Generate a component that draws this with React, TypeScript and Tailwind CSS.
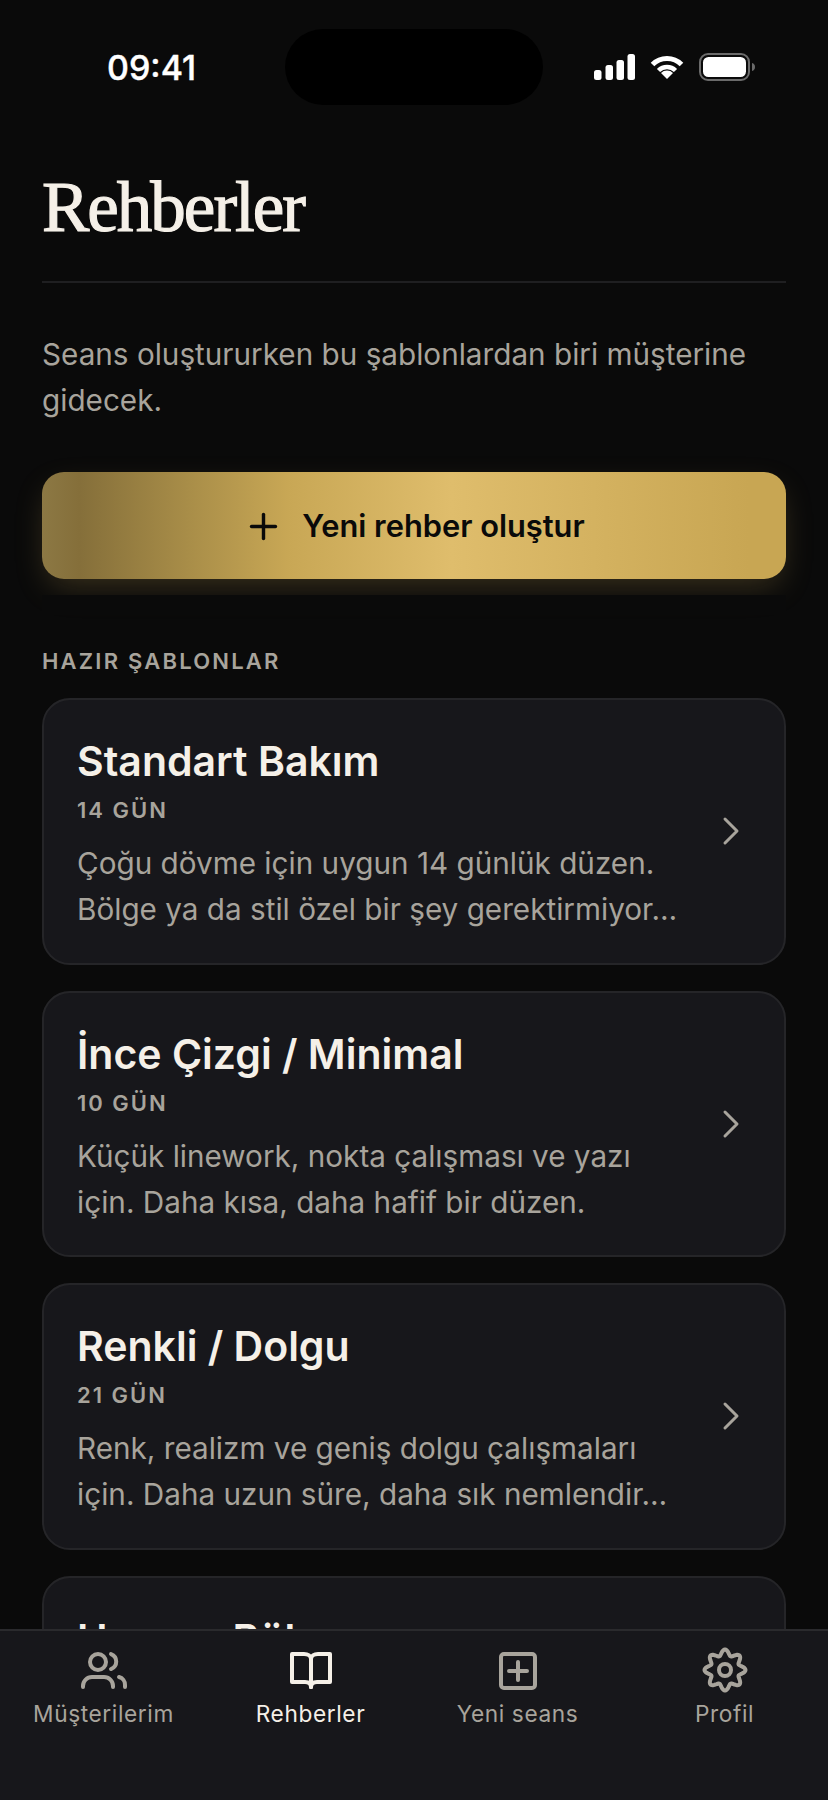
import { ChevronRight, Plus } from "lucide-react";

const guides = [
  {
    title: "Standart Bakım",
    days: "14 GÜN",
    text: "Çoğu dövme için uygun 14 günlük düzen. Bölge ya da stil özel bir şey gerektirmiyor…",
  },
  {
    title: "İnce Çizgi / Minimal",
    days: "10 GÜN",
    text: "Küçük linework, nokta çalışması ve yazı için. Daha kısa, daha hafif bir düzen.",
  },
  {
    title: "Renkli / Dolgu",
    days: "21 GÜN",
    text: "Renk, realizm ve geniş dolgu çalışmaları için. Daha uzun süre, daha sık nemlendir…",
  },
  {
    title: "Hassas Bölge",
    days: "14 GÜN",
    text: "Kaburga, boyun ve iç kol gibi hassas bölgeler için daha nazik bir düzen.",
  },
];

function gearPath() {
  const pts: string[] = [];
  for (let i = 0; i < 120; i++) {
    const a = (i / 120) * Math.PI * 2;
    const r = 17.6 + 2.9 * Math.cos(8 * a);
    pts.push(`${(23 + r * Math.sin(a)).toFixed(2)} ${(23 - r * Math.cos(a)).toFixed(2)}`);
  }
  return `M${pts.join("L")}Z`;
}

function StatusIcons() {
  return (
    <div className="flex items-center">
      <svg width="41" height="26" viewBox="0 0 41 26" fill="white">
        <rect x="0" y="16" width="7.5" height="10" rx="2.5" />
        <rect x="11.5" y="11" width="7.5" height="15" rx="2.5" />
        <rect x="22.5" y="6" width="7.5" height="20" rx="2.5" />
        <rect x="33.5" y="0" width="7.5" height="26" rx="2.5" />
      </svg>
      <svg className="ml-[14px]" width="36" height="27" viewBox="0 0 36 27" fill="none" stroke="white">
        <path d="M3.5 10.5A20.5 20.5 0 0 1 32.5 10.5" strokeWidth="5" />
        <path d="M9.5 16.5A12 12 0 0 1 26.5 16.5" strokeWidth="4.5" />
        <path d="M18 25L12 19A8.5 8.5 0 0 1 24 19Z" fill="white" stroke="none" />
      </svg>
      <svg className="ml-[14px]" width="57" height="28" viewBox="0 0 57 28" fill="none">
        <rect x="1" y="1" width="49" height="26" rx="8" stroke="#6b6b6b" strokeWidth="2" />
        <rect x="4" y="4" width="43" height="20" rx="5.5" fill="white" />
        <path d="M53 10c2 .5 3 2 3 4s-1 3.5-3 4z" fill="#6b6b6b" />
      </svg>
    </div>
  );
}

function UsersIcon() {
  return (
    <svg width="48" height="40" viewBox="0 0 48 40" fill="none" stroke="#a8a49c" strokeWidth="4" strokeLinecap="round">
      <circle cx="18" cy="12" r="8" />
      <path d="M31 4A8 8 0 0 1 31 19" />
      <path d="M3 37v-1a9 9 0 0 1 9-9h12a9 9 0 0 1 9 9v1" />
      <path d="M39 27a8 8 0 0 1 6 8v2" />
    </svg>
  );
}

function BookIcon() {
  return (
    <svg width="44" height="40" viewBox="0 0 44 40" fill="none" stroke="#f5f0e8" strokeWidth="4" strokeLinejoin="round" strokeLinecap="round">
      <path d="M22 9C22 6 19 4 15 4H3V32H16C20 32 22 34 22 37" />
      <path d="M22 9C22 6 25 4 29 4H41V32H28C24 32 22 34 22 37" />
      <path d="M22 9V37" />
    </svg>
  );
}

function NewIcon() {
  return (
    <svg width="40" height="40" viewBox="0 0 40 40" fill="none" stroke="#a8a49c" strokeWidth="4" strokeLinecap="round">
      <rect x="3" y="4" width="34" height="34" rx="3" />
      <path d="M20 12V30M11 21H29" />
    </svg>
  );
}

function GearIcon() {
  return (
    <svg width="46" height="46" viewBox="0 0 46 46" fill="none" stroke="#a8a49c" strokeWidth="4">
      <path d={gearPath()} strokeLinejoin="round" />
      <circle cx="23" cy="23" r="6" />
    </svg>
  );
}

const tabs = [
  { label: "Müşterilerim", icon: <UsersIcon /> },
  { label: "Rehberler", icon: <BookIcon />, active: true },
  { label: "Yeni seans", icon: <NewIcon /> },
  { label: "Profil", icon: <GearIcon /> },
];

export default function App() {
  return (
    <div className="flex h-[1800px] w-[828px] flex-col overflow-hidden bg-[#0a0a0a] font-['Inter',sans-serif] text-[#f5f0e8]">
      <main className="min-h-0 flex-1 overflow-hidden">
        <div className="flex h-[105px] items-center pl-[107px] pt-[29px]">
          <span className="w-[178px] text-[34px] font-medium text-white [-webkit-text-stroke:0.4px_#ffffff]">09:41</span>
          <div className="h-[76px] w-[258px] rounded-full bg-black" />
          <div className="ml-[51px]">
            <StatusIcons />
          </div>
        </div>

        <div className="px-[42px]">
          <div className="border-b-2 border-[#1f1f21] pb-[38px] pt-[66px]">
            <h1 className="font-['Liberation_Serif',serif] text-[71px] font-normal leading-[72px] tracking-[-2px] [-webkit-text-stroke:1.2px_#f5f0e8]">
              Rehberler
            </h1>
          </div>

          <p className="mt-[48px] text-[29.7px] leading-[46px] text-[#a8a49c]">
            Seans oluştururken bu şablonlardan biri müşterine gidecek.
          </p>

          <button className="mt-[49px] flex h-[107px] w-full items-center justify-center gap-[18px] rounded-[22px] bg-[linear-gradient(90deg,#8c7844_0%,#856f3a_5%,#a88d48_19.5%,#c8a755_33%,#dfbd6c_55%,#c8a653_95%,#c8a653_100%)] pt-[1px] text-[30.8px] font-semibold text-[#0a0a0a] shadow-[0_12px_32px_-6px_rgba(201,168,85,0.26)]">
            <Plus size={41} strokeWidth={2} />
            Yeni rehber oluştur
          </button>
          <div className="relative mt-[16px] h-[20px] bg-[#0a0a0a]" />

          <h2 className="mt-[32px] text-[22px] font-semibold leading-[28px] tracking-[2.2px] text-[#a8a49c]">
            HAZIR ŞABLONLAR
          </h2>

          <div className="mt-[23px] flex flex-col gap-[26px]">
            {guides.map((g) => (
              <div
                key={g.title}
                className="flex h-[266.5px] shrink-0 rounded-[28px] border-2 border-[#252528] bg-[#17171b] pl-[33px] pr-[29px]"
              >
                <div className="min-w-0 flex-1 pr-[22px] pt-[37px]">
                  <h3 className="text-[41px] font-semibold leading-[48px]">{g.title}</h3>
                  <div className="mt-[11px] text-[22px] font-semibold leading-[28px] tracking-[2px] text-[#a8a49c]">
                    {g.days}
                  </div>
                  <p className="mt-[16px] text-[29.7px] leading-[46px] text-[#a8a49c]">{g.text}</p>
                </div>
                <ChevronRight size={48} strokeWidth={1.5} className="shrink-0 self-center text-[#a8a49c]" />
              </div>
            ))}
          </div>
        </div>
      </main>

      <nav className="grid h-[171px] shrink-0 grid-cols-4 border-t-2 border-[#2a2a2d] bg-[#17171b]">
        {tabs.map((t) => (
          <div key={t.label} className="flex flex-col items-center pt-[16px]">
            <div className="flex h-[46px] items-center justify-center">{t.icon}</div>
            <span
              className={
                t.active
                  ? "mt-[6px] text-[22.7px] font-normal leading-[30px] tracking-[0.6px] text-[#f5f0e8]"
                  : "mt-[6px] text-[22.7px] font-normal leading-[30px] tracking-[0.6px] text-[#a8a49c]"
              }
            >
              {t.label}
            </span>
          </div>
        ))}
      </nav>
    </div>
  );
}
